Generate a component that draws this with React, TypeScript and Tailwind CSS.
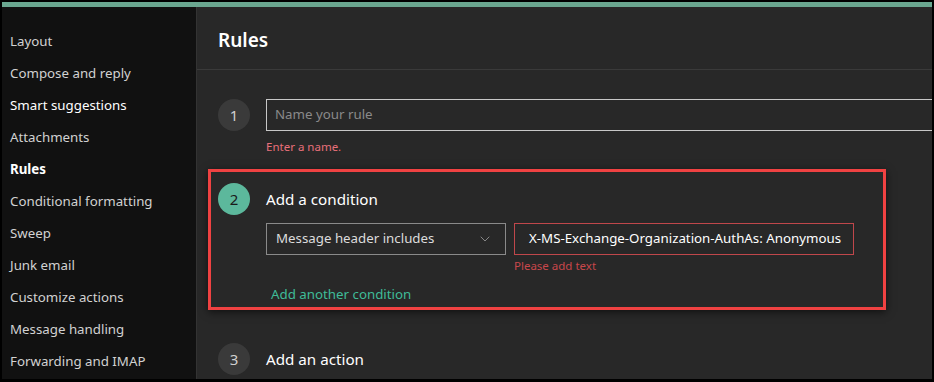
import { ChevronDown } from "lucide-react";

const navItems = [
  { label: "Layout" },
  { label: "Compose and reply" },
  { label: "Smart suggestions", hover: true },
  { label: "Attachments" },
  { label: "Rules", active: true },
  { label: "Conditional formatting" },
  { label: "Sweep" },
  { label: "Junk email" },
  { label: "Customize actions" },
  { label: "Message handling" },
  { label: "Forwarding and IMAP" },
];

function StepCircle({ n, active }: { n: number; active?: boolean }) {
  return (
    <div
      className={`w-8 h-8 rounded-full flex items-center justify-center text-[15px] shrink-0 ${
        active ? "bg-[#5cb89c] text-[#1a1a1a]" : "bg-[#3a3a3a] text-[#d0d0d0]"
      }`}
    >
      {n}
    </div>
  );
}

export default function App() {
  return (
    <div
      className="w-[934px] h-[382px] bg-black pl-[2px] pr-[2px] pt-[2px] pb-[3px] overflow-hidden"
      style={{ fontFamily: '"Noto Sans", "Open Sans", sans-serif' }}
    >
      <div className="w-full h-full flex flex-col">
        <div className="h-[5px] bg-[#6aa790] shrink-0" />
        <div className="flex flex-1 min-h-0">
          {/* Sidebar */}
          <div className="w-[195px] bg-[#111111] border-r border-[#333333] pt-[19px] shrink-0">
            {navItems.map((item) => (
              <div
                key={item.label}
                className={`h-8 flex items-center pl-2 text-[13.3px] whitespace-nowrap ${
                  item.active
                    ? "font-bold text-white"
                    : item.hover
                    ? "text-white"
                    : "text-[#d2d2d2]"
                }`}
              >
                {item.label}
              </div>
            ))}
          </div>

          {/* Main */}
          <div className="flex-1 bg-[#282828] min-w-0 overflow-hidden">
            <div className="h-[63px] border-b border-[#3a3a3a] flex items-center pl-[21px] pt-[4px]">
              <h1 className="text-[19px] font-semibold text-white">Rules</h1>
            </div>

            <div className="pl-[21px] pt-[29px]">
              {/* Step 1 */}
              <div className="flex gap-4 items-start">
                <StepCircle n={1} />
                <div className="flex-1">
                  <div className="h-8 border border-[#c8c8c8] -mr-4 flex items-center px-2 text-[13.3px] text-[#8a8a8a]">
                    Name your rule
                  </div>
                  <div className="text-[11.5px] text-[#e8707a] mt-[8px] leading-4">Enter a name.</div>
                </div>
              </div>

              {/* Step 2 highlighted */}
              <div className="mt-[14px] -ml-[10px] w-[678px] h-[141px] border-[3px] border-[#f04242] shadow-[0_2px_8px_rgba(0,0,0,0.6)] pl-[7px] pt-[11px]">
                <div className="flex gap-4 items-center">
                  <StepCircle n={2} active />
                  <div className="text-[15.2px] text-white">Add a condition</div>
                </div>
                <div className="ml-[48px] mt-[8px] flex gap-2 items-start">
                  <div className="w-[240px] h-8 border border-[#8a8a8a] flex items-center justify-between pl-[9px] pr-3 text-[13.3px] text-[#dcdcdc]">
                    <span>Message header includes</span>
                    <ChevronDown size={16} strokeWidth={1.25} className="text-[#9a9a9a]" />
                  </div>
                  <div>
                    <div className="w-[340px] h-8 border border-[#c0474b] flex items-center pl-[14px] text-[13.3px] text-white whitespace-nowrap">
                      X-MS-Exchange-Organization-AuthAs: Anonymous
                    </div>
                    <div className="text-[11.5px] leading-4 text-[#c9474b] mt-[3px]">Please add text</div>
                  </div>
                </div>
                <div className="ml-[53px] mt-[10px] text-[13.3px] leading-5 text-[#3fbc98]">Add another condition</div>
              </div>

              {/* Step 3 */}
              <div className="mt-[33px] flex gap-4 items-center">
                <StepCircle n={3} />
                <div className="text-[15.2px] text-white">Add an action</div>
              </div>
            </div>
          </div>
        </div>
      </div>
    </div>
  );
}
